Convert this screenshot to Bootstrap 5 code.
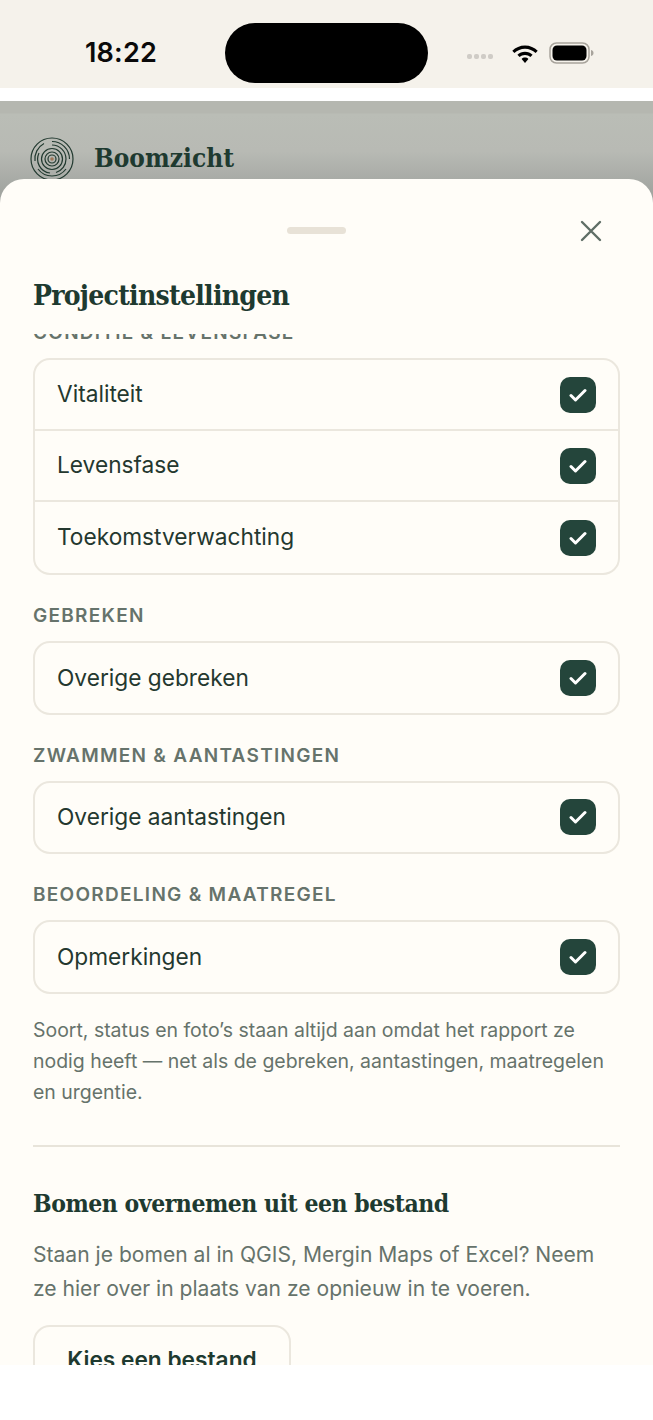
<!doctype html>
<html lang="nl"><head><meta charset="utf-8">
<link href="https://cdn.jsdelivr.net/npm/bootstrap@5.3.0/dist/css/bootstrap.min.css" rel="stylesheet">
<style>
html,body{height:1420px;background:#fff;overflow:hidden}
body{font-family:Inter,"Liberation Sans",sans-serif;color:#1f3a32}
.phone-status{height:88px;background:#f5f2eb;padding:17px 58px 0 85px}
.clock{font-size:27px;font-weight:600;color:#0a0a0a;width:140px;line-height:1;letter-spacing:.2px}
.island{width:204px;height:60px;background:#000;border-radius:30px}
.status-icons{margin-left:39px;gap:10px}
.sig-wrap{gap:2px;margin-top:8px;margin-right:8px}
.sig-dot{width:5px;height:5px;border-radius:2px;background:#cfccc6}
.gap-top{height:13px;background:#fff}
.stage{height:1264px;background:#fff;position:relative}
.backdrop{height:130px;background:linear-gradient(#b5b7b0 0,#b5b7b0 12px,#babdb6 13px,#b8bab4 50px,#a2a5a0 90px);padding:36px 30px}
.brand,.sheet-title,.sub-title{font-family:"DejaVu Serif Condensed","DejaVu Serif",serif;font-weight:700;font-stretch:condensed;color:#1e3a30}
.brand{font-size:26px;letter-spacing:0;line-height:42px;margin-left:20px}
.sheet{position:absolute;left:0;right:0;top:78px;height:1186px;background:#fffdf8;border-radius:24px 24px 0 0;overflow:hidden}
.grip{width:59px;height:7px;border-radius:4px;background:#e8e2d7}
.sheet-top{height:104px;position:relative}
.sheet-title{position:absolute;left:33px;top:98px;margin:0;font-size:28px;letter-spacing:-.72px;line-height:38px}
.grip-row{padding-top:48px;padding-right:20px}
.close-x{position:absolute;left:579px;top:40px;display:block;padding:0;border:0;background:none;line-height:0}
.scroller{position:absolute;top:155px;left:0;right:0;bottom:0;overflow:hidden;padding:0 33px}
.scroller-inner{margin-top:-14px}
.sec-label{font-size:19px;font-weight:600;letter-spacing:1.28px;color:#66736b;line-height:26px;margin:0 0 12px;text-transform:uppercase}
.opt-list{border:2px solid #ebe7de;border-radius:17px;background:#fffdf8;margin-bottom:28px;overflow:hidden}
.opt-row{height:71px;padding:0 22px 0 22px;font-size:22.7px;color:#24382f;border-bottom:2px solid #ebe7de}
.opt-row:last-child{border-bottom:0}
.opt-list.single .opt-row{height:69.5px}
.chk{width:36px;height:36px;border-radius:10px;background:#24453b}
.note{font-size:19.47px;line-height:31px;color:#66736b;margin:-6.5px 0 37px}
.divider{height:2px;background:#e8e4da;margin-bottom:39px}
.sub-title{font-size:24.5px;letter-spacing:-.47px;line-height:36px;margin:0 0 16px}
.lead-note{font-size:21.09px;line-height:34px;color:#66736b;margin:0 0 19px}
.file-btn{border:2px solid #ebe7de;border-radius:17px;background:transparent;width:258px;height:70px;font-size:22.7px;font-weight:600;color:#1e3a30;padding:0}
</style></head><body>
<div class="phone-status d-flex align-items-center">
  <div class="clock">18:22</div>
  <div class="island"></div>
  <div class="status-icons d-flex align-items-center">
    <div class="d-flex sig-wrap"><span class="sig-dot"></span><span class="sig-dot"></span><span class="sig-dot"></span><span class="sig-dot"></span></div>
    <svg width="28" height="22" viewBox="0 0 28 22"><path d="M14 3.6C19 3.6 23.4 5.6 26.7 8.8L24.6 11.1C21.8 8.4 18.1 6.8 14 6.8S6.2 8.4 3.4 11.1L1.3 8.8C4.6 5.6 9 3.6 14 3.6Z" fill="#000"/><path d="M14 9.7C16.9 9.7 19.6 10.9 21.6 12.8L19.4 15.1C18 13.7 16.1 12.9 14 12.9S10 13.7 8.6 15.1L6.4 12.8C8.4 10.9 11.1 9.7 14 9.7Z" fill="#000"/><path d="M14 15.6C15.3 15.6 16.5 16.1 17.4 17L14 21 10.6 17C11.5 16.1 12.7 15.6 14 15.6Z" fill="#000"/></svg>
    <svg width="46" height="22" viewBox="0 0 46 22"><rect x="1" y="1" width="39" height="20" rx="6.5" fill="none" stroke="#a8a49c" stroke-width="1.5"/><rect x="3.5" y="3.5" width="34" height="15" rx="4.5" fill="#000"/><path d="M42 8c2 .5 2.5 1.6 2.5 3s-.5 2.500-2.500 3z" fill="#a8a49c"/></svg>
  </div>
</div>
<div class="gap-top"></div>
<div class="stage">
  <div class="backdrop d-flex align-items-start">
    <svg width="44" height="44" viewBox="0 0 44 44" fill="none" stroke="#21392f" stroke-width="1.200">
      <circle cx="22" cy="22" r="21"/>
      <path d="M22 4.500A17.500 17.500 0 0 1 39.500 22M36 32A17.500 17.500 0 0 1 8 32M5 24A17.500 17.500 0 0 1 14 6.500"/>
      <path d="M22 8A14 14 0 0 1 36 22A14 14 0 0 1 26 35.500M20 36A14 14 0 0 1 9 16"/>
      <circle cx="22" cy="22" r="10.500"/><circle cx="22" cy="22" r="7"/><circle cx="22" cy="22" r="4"/>
      <circle cx="22" cy="22" r="1.800" fill="#a0785a" stroke="none"/>
    </svg>
    <div class="brand">Boomzicht</div>
  </div>
  <div class="sheet">
    <div class="sheet-top">
      <div class="grip-row d-flex justify-content-center"><div class="grip"></div></div>
      <button class="close-x" aria-label="Sluiten"><svg width="24" height="24" viewBox="0 0 24 24" fill="none" stroke="#5f6e66" stroke-width="2.400" stroke-linecap="round"><path d="M3 3 21 21M21 3 3 21"/></svg></button>
    </div>
    <h1 class="sheet-title">Projectinstellingen</h1>
    <div class="scroller"><div class="scroller-inner">
      <p class="sec-label">Conditie &amp; levensfase</p>
      <div class="opt-list">
        <div class="opt-row d-flex align-items-center justify-content-between"><span>Vitaliteit</span><span class="chk d-flex align-items-center justify-content-center"><svg width="18" height="14" viewBox="0 0 18 14" fill="none" stroke="#fff" stroke-width="3" stroke-linecap="round" stroke-linejoin="round"><path d="M2 7.500 6.500 12 16 2.500"/></svg></span></div>
        <div class="opt-row d-flex align-items-center justify-content-between"><span>Levensfase</span><span class="chk d-flex align-items-center justify-content-center"><svg width="18" height="14" viewBox="0 0 18 14" fill="none" stroke="#fff" stroke-width="3" stroke-linecap="round" stroke-linejoin="round"><path d="M2 7.500 6.500 12 16 2.500"/></svg></span></div>
        <div class="opt-row d-flex align-items-center justify-content-between"><span>Toekomstverwachting</span><span class="chk d-flex align-items-center justify-content-center"><svg width="18" height="14" viewBox="0 0 18 14" fill="none" stroke="#fff" stroke-width="3" stroke-linecap="round" stroke-linejoin="round"><path d="M2 7.500 6.500 12 16 2.500"/></svg></span></div>
      </div>
      <p class="sec-label">Gebreken</p>
      <div class="opt-list single"><div class="opt-row d-flex align-items-center justify-content-between"><span>Overige gebreken</span><span class="chk d-flex align-items-center justify-content-center"><svg width="18" height="14" viewBox="0 0 18 14" fill="none" stroke="#fff" stroke-width="3" stroke-linecap="round" stroke-linejoin="round"><path d="M2 7.500 6.500 12 16 2.500"/></svg></span></div></div>
      <p class="sec-label">Zwammen &amp; aantastingen</p>
      <div class="opt-list single"><div class="opt-row d-flex align-items-center justify-content-between"><span>Overige aantastingen</span><span class="chk d-flex align-items-center justify-content-center"><svg width="18" height="14" viewBox="0 0 18 14" fill="none" stroke="#fff" stroke-width="3" stroke-linecap="round" stroke-linejoin="round"><path d="M2 7.500 6.500 12 16 2.500"/></svg></span></div></div>
      <p class="sec-label">Beoordeling &amp; maatregel</p>
      <div class="opt-list single"><div class="opt-row d-flex align-items-center justify-content-between"><span>Opmerkingen</span><span class="chk d-flex align-items-center justify-content-center"><svg width="18" height="14" viewBox="0 0 18 14" fill="none" stroke="#fff" stroke-width="3" stroke-linecap="round" stroke-linejoin="round"><path d="M2 7.500 6.500 12 16 2.500"/></svg></span></div></div>
      <p class="note">Soort, status en foto’s staan altijd aan omdat het rapport ze nodig heeft — net als de gebreken, aantastingen, maatregelen en urgentie.</p>
      <div class="divider"></div>
      <h2 class="sub-title">Bomen overnemen uit een bestand</h2>
      <p class="lead-note">Staan je bomen al in QGIS, Mergin Maps of Excel? Neem ze hier over in plaats van ze opnieuw in te voeren.</p>
      <button class="file-btn">Kies een bestand</button>
    </div></div>
  </div>
</div>
<script src="https://cdn.jsdelivr.net/npm/bootstrap@5.3.0/dist/js/bootstrap.bundle.min.js"></script>
</body></html>
